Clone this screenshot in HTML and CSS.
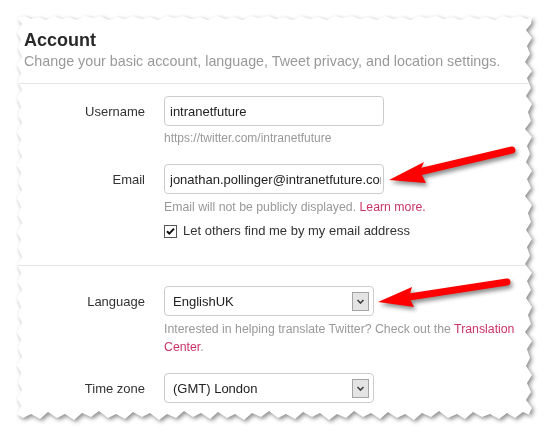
FILE: index.html
```html
<!DOCTYPE html>
<html>
<head>
    <title>Account settings</title>
    <link rel="stylesheet" href="styles.css">
</head>
<body>
    <div class="page">
        <div class="frame">
            <div class="sheet">
                <div class="header">
                    <h1>Account</h1>
                    <p class="subtitle">Change your basic account, language, Tweet privacy, and location settings.</p>
                </div>

                <div class="section">
                    <div class="row">
                        <label class="label" for="username">Username</label>
                        <div class="control">
                            <input type="text" id="username" class="text-input" value="intranetfuture">
                            <p class="hint">https://twitter.com/intranetfuture</p>
                        </div>
                    </div>
                    <div class="row">
                        <label class="label" for="email">Email</label>
                        <div class="control">
                            <input type="text" id="email" class="text-input" value="jonathan.pollinger@intranetfuture.com">
                            <p class="hint hint-email">Email will not be publicly displayed. <a href="#">Learn more.</a></p>
                            <label class="check">
                                <svg class="check-box" width="13" height="13" viewBox="0 0 13 13">
                                    <rect x="0.5" y="0.5" width="12" height="12" fill="#fff" stroke="#555"/>
                                    <path d="M3 6.2 L5.3 8.6 L10 3.6" fill="none" stroke="#111" stroke-width="2"/>
                                </svg>
                                Let others find me by my email address
                            </label>
                        </div>
                    </div>
                </div>

                <div class="section section-last">
                    <div class="row">
                        <span class="label">Language</span>
                        <div class="control">
                            <div class="select">
                                <span>EnglishUK</span>
                                <svg class="select-btn" width="17" height="19" viewBox="0 0 17 19">
                                    <rect x="0.5" y="0.5" width="16" height="18" fill="#e4e4e4" stroke="#a4a4a4"/>
                                    <path d="M5.5 8 L8.5 11 L11.5 8" fill="none" stroke="#444" stroke-width="1.6"/>
                                </svg>
                            </div>
                            <p class="hint hint-wide">Interested in helping translate Twitter? Check out the <a href="#">Translation</a><br><a href="#">Center</a>.</p>
                        </div>
                    </div>
                    <div class="row">
                        <span class="label">Time zone</span>
                        <div class="control">
                            <div class="select">
                                <span>(GMT) London</span>
                                <svg class="select-btn" width="17" height="19" viewBox="0 0 17 19">
                                    <rect x="0.5" y="0.5" width="16" height="18" fill="#e4e4e4" stroke="#a4a4a4"/>
                                    <path d="M5.5 8 L8.5 11 L11.5 8" fill="none" stroke="#444" stroke-width="1.6"/>
                                </svg>
                            </div>
                        </div>
                    </div>
                </div>
            </div>
        </div>

        <!-- annotation arrows drawn over the screenshot -->
        <svg class="arrows" width="553" height="437" viewBox="0 0 553 437">
            <line x1="419" y1="172" x2="512" y2="150" stroke="#f00" stroke-width="7" stroke-linecap="round"/>
            <polygon points="389,180 424,162 420,171 426,183" fill="#f00"/>
            <line x1="409" y1="297" x2="507" y2="282" stroke="#f00" stroke-width="7" stroke-linecap="round"/>
            <polygon points="378,302 412,287 409,297 414,307" fill="#f00"/>
        </svg>
    </div>
</body>
</html>
```

FILE: styles.css
```css
body {
    margin: 0;
    font-family: "Liberation Sans", Arial, sans-serif;
    color: #333;
    background: #fff;
}
.page {
    position: relative;
    width: 553px;
    height: 437px;
    padding: 16px 0 0 17px;
    box-sizing: border-box;
}
.frame {
    width: 515px;
    filter: drop-shadow(2px 2px 2px rgba(0, 0, 0, 0.45));
}
.sheet {
    height: 404px;
    background: #fff;
    overflow: hidden;
    clip-path: polygon(
        0px 2px, 8px 0px, 14px 3px, 22px 1px, 29px 4px, 37px 0px, 45px 3px, 51px 1px, 60px 4px, 68px 0px,
        76px 2px, 83px 0px, 92px 4px, 100px 1px, 108px 3px, 116px 0px, 125px 3px, 133px 1px, 141px 4px, 150px 0px,
        158px 2px, 166px 0px, 175px 3px, 183px 1px, 191px 4px, 200px 0px, 209px 3px, 217px 1px, 226px 4px, 234px 0px,
        242px 2px, 251px 0px, 259px 3px, 267px 1px, 276px 4px, 284px 0px, 293px 3px, 301px 1px, 310px 4px, 318px 0px,
        326px 2px, 335px 0px, 343px 3px, 351px 1px, 360px 4px, 368px 0px, 377px 3px, 385px 1px, 394px 4px, 402px 0px,
        410px 2px, 419px 0px, 427px 3px, 435px 1px, 444px 4px, 452px 0px, 461px 3px, 469px 1px, 478px 4px, 486px 0px,
        494px 2px, 503px 0px, 510px 3px, 515px 1px,
        514px 8px, 509px 14px, 515px 22px, 510px 30px, 513px 38px, 508px 46px, 515px 55px, 510px 62px, 514px 72px, 509px 80px,
        515px 88px, 511px 96px, 514px 105px, 508px 113px, 515px 121px, 510px 130px, 513px 138px, 509px 146px, 515px 155px, 510px 163px,
        514px 172px, 508px 180px, 515px 189px, 511px 197px, 514px 206px, 509px 214px, 515px 223px, 510px 231px, 513px 240px, 508px 248px,
        515px 257px, 510px 265px, 514px 274px, 509px 282px, 515px 291px, 511px 299px, 514px 308px, 508px 316px, 515px 325px, 510px 333px,
        513px 342px, 509px 350px, 515px 359px, 510px 367px, 514px 376px, 509px 384px, 515px 392px, 512px 398px,
        515px 400px, 506px 396px, 498px 402px, 490px 397px, 482px 403px, 473px 398px, 465px 401px, 456px 396px, 448px 403px, 440px 398px,
        431px 402px, 422px 395px, 414px 401px, 405px 397px, 397px 404px, 388px 398px, 380px 402px, 371px 396px, 363px 403px, 354px 397px,
        346px 401px, 337px 395px, 329px 402px, 320px 398px, 312px 404px, 303px 397px, 295px 401px, 286px 396px, 278px 403px, 269px 398px,
        261px 402px, 252px 395px, 244px 401px, 235px 397px, 227px 404px, 218px 398px, 210px 402px, 201px 396px, 193px 403px, 184px 397px,
        176px 401px, 167px 395px, 159px 402px, 150px 398px, 142px 404px, 133px 397px, 125px 401px, 116px 396px, 108px 403px, 99px 398px,
        91px 402px, 82px 395px, 74px 401px, 65px 397px, 57px 404px, 48px 398px, 40px 402px, 31px 396px, 23px 403px, 14px 398px,
        6px 402px, 0px 398px,
        4px 390px, 0px 382px, 5px 374px, 1px 366px, 4px 357px, 0px 349px, 5px 341px, 1px 332px, 4px 324px, 0px 316px,
        5px 307px, 1px 299px, 4px 291px, 0px 282px, 5px 274px, 1px 266px, 4px 257px, 0px 249px, 5px 241px, 1px 232px,
        4px 224px, 0px 216px, 5px 207px, 1px 199px, 4px 191px, 0px 182px, 5px 174px, 1px 166px, 4px 157px, 0px 149px,
        5px 141px, 1px 132px, 4px 124px, 0px 116px, 5px 107px, 1px 99px, 4px 91px, 0px 82px, 5px 74px, 1px 66px,
        4px 57px, 0px 49px, 5px 41px, 1px 32px, 4px 24px, 0px 16px, 5px 8px
    );
}
.header {
    padding: 13px 7px 13px;
    border-bottom: 1px solid #e6e6e6;
}
h1 {
    margin: 0;
    font-size: 18px;
    line-height: 22px;
    font-weight: bold;
    color: #292929;
}
.subtitle {
    margin: 1px 0 0;
    font-size: 14.3px;
    line-height: 18px;
    color: #999;
}
.section {
    display: flex;
    flex-direction: column;
    gap: 17px;
    padding: 12px 0 25px;
    border-bottom: 1px solid #e6e6e6;
}
.section-last {
    padding-top: 20px;
    border-bottom: none;
}
.row {
    display: flex;
    align-items: flex-start;
}
.label {
    width: 128px;
    margin-right: 19px;
    text-align: right;
    font-size: 13px;
    line-height: 31px;
    color: #333;
}
.control {
    width: 360px;
}
.text-input {
    display: block;
    width: 220px;
    height: 30px;
    box-sizing: border-box;
    margin: 0;
    padding: 0 2px 0 5px;
    border: 1px solid #ccc;
    border-radius: 4px;
    font-family: inherit;
    font-size: 13px;
    color: #222;
    background: #fff;
}
.hint {
    margin: 3px 0 0;
    font-size: 12px;
    line-height: 18px;
    color: #999;
}
.hint-email {
    margin-top: 4px;
    font-size: 12.3px;
}
.hint-wide {
    width: 360px;
    margin-top: 4px;
    font-size: 12.3px;
}
.hint a {
    color: #cc3366;
    text-decoration: none;
}
.check {
    display: flex;
    align-items: center;
    gap: 6px;
    margin-top: 6px;
    font-size: 13px;
    line-height: 18px;
    color: #333;
}
.check-box {
    display: block;
}
.select {
    display: flex;
    align-items: center;
    justify-content: space-between;
    width: 210px;
    height: 30px;
    box-sizing: border-box;
    padding: 0 4px 0 8px;
    border: 1px solid #ccc;
    border-radius: 4px;
    font-size: 13px;
    color: #222;
}
.select-btn {
    display: block;
}
.arrows {
    position: absolute;
    top: 0;
    left: 0;
    pointer-events: none;
    filter: drop-shadow(2px 3px 2px rgba(0, 0, 0, 0.45));
}
```
